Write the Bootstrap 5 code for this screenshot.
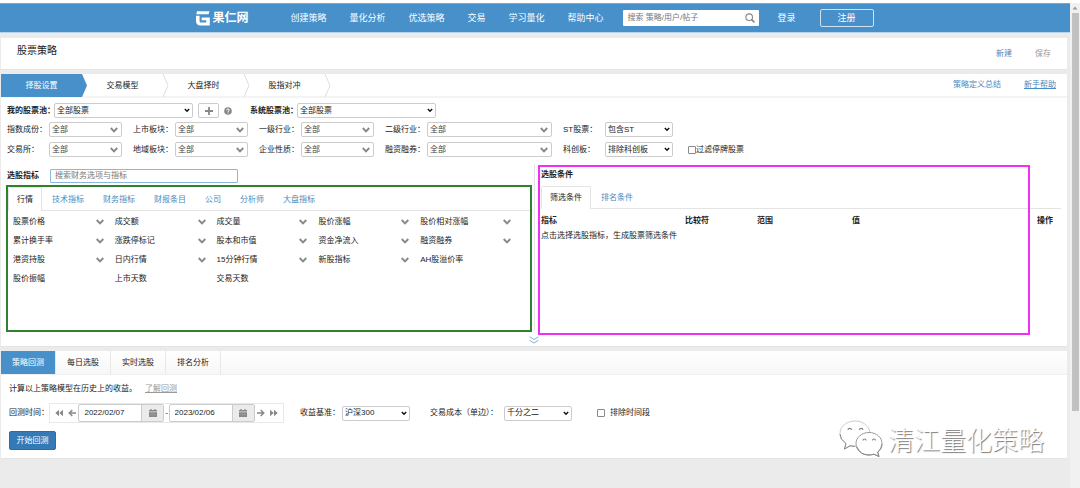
<!DOCTYPE html>
<html lang="zh-CN">
<head>
<meta charset="utf-8">
<meta name="viewport" content="width=device-width, initial-scale=1">
<title>果仁网 - 股票策略</title>
<link rel="stylesheet" href="https://cdn.jsdelivr.net/npm/bootstrap@5.3.0/dist/css/bootstrap.min.css">
<style>
body{font:8px/12px "Liberation Sans","Noto Sans CJK SC",sans-serif;color:#222;background:#ebebeb;min-height:100vh}
a{color:#4a8ac0;text-decoration:none}
input,select,button{font:inherit;color:inherit}
label{white-space:nowrap}
.page-main{min-width:0;padding-top:3px;background:linear-gradient(#fff 3px,transparent 3px)}
.topbar{height:30px;background:#4790ca;border-top:1px solid #6fa9d8;border-bottom:1px solid #b9d3e8;font-size:9px}
.topbar a{color:#fff}
.brand-link{gap:2px}
.brand-name{font-size:12px;font-weight:700}
.main-menu{gap:23px;margin-left:42px}
.site-search{width:136px;height:16px;background:#fff;margin-left:19px;padding-right:4px;border-radius:1px}
.site-search input{font-size:8px;width:110px;padding:0 0 0 5px}
.plain-input{border:0;outline:0;background:transparent;min-width:0}
::placeholder{color:#777!important;opacity:1}
.login-link{margin-left:19px}
.register-btn{width:54px;height:18px;margin-left:24px;padding:0;border:1px solid #cfe2f2;border-radius:2px;background:transparent;color:#fff;line-height:14px}
.panel{background:#fff;margin:0 3px 4px 1px;border-bottom:1px solid #e4e4e4;position:relative}
.title-panel{height:32px;margin-top:5px;padding:0 16px}
.title-panel h1{font-size:10px;line-height:14px;margin:0 0 5px;font-weight:400}
.title-panel nav{gap:23px;padding-top:1px}
.muted-link{color:#999}
.step-bar{height:24px;border-bottom:2px solid #f4f4f4;padding-right:11px}
.step-bar .step{width:81px;height:23px;color:#222;position:relative;text-align:center;line-height:23px}
.step svg{position:absolute;right:-6px;top:0;z-index:1}
.step-bar .step.active{background:#4790ca;color:#fff}
.help-links{gap:23px}
.filters{padding:5px 6px 0}
.pool-row{height:15px;margin-bottom:4px}
.pool-row label{width:47px}
.hint-icon{margin:0 18px 0 5px}
.filter-row{gap:5px 11px;margin-bottom:5px}
.filter-row label.name{width:42px}
.drop{appearance:none;height:15px;border:1px solid #ccc;border-radius:2px;padding:0 12px 0 2px;line-height:12px;background:#fff url("data:image/svg+xml,%3Csvg xmlns='http://www.w3.org/2000/svg' width='6' height='5'%3E%3Cpath d='M.8 1 3 3.3 5.2 1' fill='none' stroke='%23111' stroke-width='1.4'/%3E%3C/svg%3E") no-repeat right 2px center}
.drop.soft{color:#444;background-image:url("data:image/svg+xml,%3Csvg xmlns='http://www.w3.org/2000/svg' width='8' height='6'%3E%3Cpath d='M.8 1 4 4.3 7.2 1' fill='none' stroke='%23888' stroke-width='1.9'/%3E%3C/svg%3E");background-position:right 3px center}
.w-a{width:73px}.w-b{width:125px}.w-c{width:68px}.w-pool{width:139px}
.add-btn{width:21px;height:15px;border:1px solid #ccc;border-radius:2px;background:#fff;padding:0;line-height:0;margin-left:5px}
.tick{appearance:none;width:8px;height:8px;border:1px solid #888;border-radius:1px;background:#fff;margin:0}
.tick:checked{background:#4790ca}
.builder{padding-top:2px}
.left-pane{width:534px;border-right:1px solid #e4e4e4;height:167px;padding:4px 2px 0 5px}
.find-row{height:15px;padding-left:1px;margin-bottom:2px}
.find-row input{width:188px;height:14px;border:1px solid #8bb8dd;border-radius:1px;padding:0 4px;outline:0}
.find-row label{width:43px}
.metric-box{height:147px;border:2px solid #2f8130}
.tabs-line{gap:1px;border-bottom:1px solid #e4e4e4;height:24px}
.tabs-line button{border:1px solid transparent;border-bottom:0;background:transparent;color:#4a8ac0;padding:0 8px;height:24px;border-radius:2px 2px 0 0;white-space:nowrap}
.tabs-line button.active{background:#fff;border-color:#e4e4e4;color:#222}
.metrics{display:grid;grid-template-columns:repeat(5,1fr);padding:1px 8px 0 5px}
.metrics a{color:#222;height:19px;padding-right:11px}
.right-pane{padding:4px 6px 0 6px;position:relative}
.right-pane h2{font-size:8px;line-height:14px;font-weight:700;margin:0 0 4px}
.right-pane .tabs-line{height:23px}
.right-pane .tabs-line button{height:23px}
.cond{width:100%;margin-top:4px;table-layout:fixed}
.cond th,.cond td{padding:0;height:15px;line-height:12px}
.col-metric{width:144px}.col-compare{width:72px}.col-range{width:95px}.col-action{width:24px}
.mark-frame{position:absolute;left:3px;right:37px;top:1px;height:170px;border:2px solid #f02ff0;pointer-events:none}
.expand{height:15px;width:100%;border:0;background:transparent;padding:2px 0 0;line-height:0}
.mode-bar{height:24px;background:linear-gradient(#fff,#f7f7f7);border-bottom:1px solid #f0f0f0}
.mode-bar button{width:55px;border:0;border-right:1px solid #e8e8e8;background:transparent;padding:0}
.mode-bar button.active{background:#4790ca;color:#fff}
.test-body{padding:8px}
.intro{gap:8px;margin-bottom:8px}
.test-row{height:20px}
.test-row .lb-time{width:40px}
.test-row .lb-base{width:42px;margin-left:16px}
.test-row .lb-cost{width:74px;margin-left:20px}
.test-row .tick{margin:0 5px 0 25px}
.range-box{height:20px;border:1px solid #e8e8e8;width:235px;padding:0 3px}
.range-box .nav-btn{border:0;background:transparent;padding:0;width:12px;line-height:0}
.date-group{width:86px;height:18px;border:1px solid #ccc;border-radius:2px}
.date-group input{width:62px;padding:0 5px}
.date-group button{width:22px;height:16px;border:0;border-left:1px solid #ccc;background:#ebebeb;padding:0;line-height:0}
.run-btn{width:47px;height:19px;border:1px solid #2e6da4;border-radius:2px;background:#337ab7;color:#fff;padding:0;margin-top:8px}
.wm{position:absolute;right:23px;bottom:0;color:#fff;font:300 26px/36px "Noto Sans CJK SC",sans-serif;text-shadow:1px 1px 1px #777;gap:5px}
.scroll-track{width:10px;background:#f1f1f1;border-top:3px solid #fff;flex:none}
.scroll-thumb{width:7px;height:82%;background:#c1c1c1;margin:0 0 0 2px}
</style>
</head>
<body class="d-flex">
<svg class="d-none">
<symbol id="chev" viewBox="0 0 8 6"><path d="M.7 1 4 4.3 7.3 1" fill="none" stroke="#888" stroke-width="1.9"/></symbol>
<symbol id="arrow" viewBox="0 0 8 8"><path d="M8 4H1.5M4.3 1 1.3 4l3 3" fill="none" stroke="#888" stroke-width="1.5"/></symbol>
<symbol id="rewind" viewBox="0 0 8 8"><path d="M4 .7v6.6L.3 4zM8 .7v6.6L4.3 4z" fill="#888"/></symbol>
<symbol id="cal" viewBox="0 0 8 8"><path d="M0 1h1.4V0h1.2v1h2.8V0h1.2v1H8v1.5H0zM0 3.2h8V8H0z" fill="#888"/><path d="M1 5.5h6M3 3.5v4M5.2 3.5v4" stroke="#aaa" stroke-width=".4"/></symbol>
</svg>
<div class="page-main flex-grow-1">
  <header class="topbar d-flex align-items-center justify-content-center">
    <a href="#" class="brand-link d-flex align-items-center">
      <svg width="14" height="15" viewBox="0 0 14 15"><path d="M1 .3h12.500l-1 3H.3zM0 4.800h3.600v5.400q0 1.300 1.300 1.300h5.300V9.200H5.600V6.400H13.800v8.100H4.500Q0 14.300 0 10z" fill="#fff"/></svg>
      <span class="brand-name">果仁网</span>
    </a>
    <nav class="main-menu d-flex">
      <a href="#">创建策略</a><a href="#">量化分析</a><a href="#">优选策略</a><a href="#">交易</a><a href="#">学习量化</a><a href="#">帮助中心</a>
    </nav>
    <form class="site-search d-flex align-items-center justify-content-between">
      <input class="plain-input" type="text" placeholder="搜索 策略/用户/帖子" aria-label="搜索">
      <svg width="10" height="10" viewBox="0 0 10 10"><circle cx="4.2" cy="4.2" r="3.3" fill="none" stroke="#888" stroke-width="1.1"/><path d="m6.6 6.6 2.8 2.8" stroke="#888" stroke-width="1.6"/></svg>
    </form>
    <a href="#" class="login-link">登录</a>
    <button class="register-btn" type="button">注册</button>
  </header>

  <section class="panel title-panel d-flex align-items-center justify-content-between">
    <h1>股票策略</h1>
    <nav class="d-flex"><a href="#">新建</a><a href="#" class="muted-link">保存</a></nav>
  </section>

  <section class="panel">
    <div class="step-bar d-flex align-items-center justify-content-between">
      <div class="d-flex">
        <a href="#" class="step active">择股设置<svg width="7" height="23" viewBox="0 0 7 23"><path d="M0 0h1l5 11.500L1 23H0z" fill="#4790ca"/></svg></a>
        <a href="#" class="step">交易模型<svg width="7" height="23" viewBox="0 0 7 23"><path d="m1 0 5 11.500L1 23" fill="none" stroke="#ddd"/></svg></a>
        <a href="#" class="step">大盘择时<svg width="7" height="23" viewBox="0 0 7 23"><path d="m1 0 5 11.500L1 23" fill="none" stroke="#ddd"/></svg></a>
        <a href="#" class="step">股指对冲<svg width="7" height="23" viewBox="0 0 7 23"><path d="m1 0 5 11.500L1 23" fill="none" stroke="#ddd"/></svg></a>
      </div>
      <nav class="help-links d-flex"><a href="#">策略定义总结</a><a href="#" class="text-decoration-underline">新手帮助</a></nav>
    </div>
    <div class="filters">
      <div class="pool-row d-flex align-items-center">
        <label for="mine" class="fw-bold">我的股票池：</label>
        <select id="mine" class="drop w-pool"><option>全部股票</option></select>
        <button class="add-btn" type="button" aria-label="添加"><svg width="8" height="8"><path d="M4 0v8M0 4h8" stroke="#888" stroke-width="1.800"/></svg></button>
        <svg class="hint-icon" width="8" height="8" viewBox="0 0 8 8"><circle cx="4" cy="4" r="3.800" fill="#888"/><path d="M2.700 3.200Q2.800 2 4 2t1.300 1.100Q5.300 3.800 4 4.300v.6M4 5.500v1" fill="none" stroke="#fff" stroke-width="1"/></svg>
        <label for="sys" class="fw-bold">系统股票池：</label>
        <select id="sys" class="drop w-pool"><option>全部股票</option></select>
      </div>
      <div class="filter-row d-flex flex-wrap">
        <div class="d-flex align-items-center"><label class="name" for="f1">指数成份：</label><select id="f1" class="drop soft w-a"><option>全部</option></select></div>
        <div class="d-flex align-items-center"><label class="name" for="f2">上市板块：</label><select id="f2" class="drop soft w-a"><option>全部</option></select></div>
        <div class="d-flex align-items-center"><label class="name" for="f3">一级行业：</label><select id="f3" class="drop soft w-a"><option>全部</option></select></div>
        <div class="d-flex align-items-center"><label class="name" for="f4">二级行业：</label><select id="f4" class="drop soft w-b"><option>全部</option></select></div>
        <div class="d-flex align-items-center"><label class="name" for="f5">ST股票：</label><select id="f5" class="drop w-c"><option>包含ST</option></select></div>
      </div>
      <div class="filter-row d-flex flex-wrap">
        <div class="d-flex align-items-center"><label class="name" for="g1">交易所：</label><select id="g1" class="drop soft w-a"><option>全部</option></select></div>
        <div class="d-flex align-items-center"><label class="name" for="g2">地域板块：</label><select id="g2" class="drop soft w-a"><option>全部</option></select></div>
        <div class="d-flex align-items-center"><label class="name" for="g3">企业性质：</label><select id="g3" class="drop soft w-a"><option>全部</option></select></div>
        <div class="d-flex align-items-center"><label class="name" for="g4">融资融券：</label><select id="g4" class="drop soft w-b"><option>全部</option></select></div>
        <div class="d-flex align-items-center"><label class="name" for="g5">科创板：</label><select id="g5" class="drop w-c"><option>排除科创板</option></select></div>
        <div class="d-flex align-items-center ms-1"><input class="tick" type="checkbox" id="halt"><label for="halt">过滤停牌股票</label></div>
      </div>
    </div>
    <div class="builder d-flex">
      <div class="left-pane flex-shrink-0">
        <div class="find-row d-flex align-items-center"><label for="find" class="fw-bold">选股指标</label><input id="find" type="text" placeholder="搜索财务选项与指标"></div>
        <div class="metric-box">
          <div class="tabs-line d-flex"><button type="button" class="active">行情</button><button type="button">技术指标</button><button type="button">财务指标</button><button type="button">财报条目</button><button type="button">公司</button><button type="button">分析师</button><button type="button">大盘指标</button></div>
          <div class="metrics" id="metrics"></div>
        </div>
      </div>
      <div class="right-pane flex-grow-1">
        <h2>选股条件</h2>
        <div class="tabs-line d-flex"><button type="button" class="active">筛选条件</button><button type="button">排名条件</button></div>
        <table class="cond">
          <colgroup><col class="col-metric"><col class="col-compare"><col class="col-range"><col><col class="col-action"></colgroup>
          <thead><tr><th>指标</th><th>比较符</th><th>范围</th><th>值</th><th>操作</th></tr></thead>
          <tbody><tr><td colspan="5">点击选择选股指标，生成股票筛选条件</td></tr></tbody>
        </table>
        <div class="mark-frame"></div>
      </div>
    </div>
    <button class="expand d-block" type="button" aria-label="展开"><svg width="10" height="8" viewBox="0 0 10 8"><path d="m.5.7 4.500 2.800L9.500.7M.5 4.200 5 7l4.500-2.800" fill="none" stroke="#7fb0da"/></svg></button>
  </section>

  <section class="panel">
    <div class="mode-bar d-flex"><button type="button" class="active">策略回测</button><button type="button">每日选股</button><button type="button">实时选股</button><button type="button">排名分析</button></div>
    <div class="test-body">
      <div class="intro d-flex"><span>计算以上策略模型在历史上的收益。</span><a href="#" class="muted-link text-decoration-underline">了解回测</a></div>
      <div class="test-row d-flex align-items-center">
        <label for="d1" class="lb-time">回测时间：</label>
        <div class="range-box d-flex align-items-center justify-content-between">
          <button class="nav-btn" type="button" aria-label="最早"><svg width="8" height="8"><use href="#rewind"/></svg></button>
          <button class="nav-btn" type="button" aria-label="前移"><svg width="8" height="8"><use href="#arrow"/></svg></button>
          <div class="date-group d-flex"><input id="d1" class="plain-input" type="text" value="2022/02/07"><button type="button" aria-label="选择开始日期"><svg width="8" height="8"><use href="#cal"/></svg></button></div>
          <span>-</span>
          <div class="date-group d-flex"><input class="plain-input" type="text" value="2023/02/06" aria-label="结束日期"><button type="button" aria-label="选择结束日期"><svg width="8" height="8"><use href="#cal"/></svg></button></div>
          <button class="nav-btn" type="button" aria-label="后移"><svg width="8" height="8"><use href="#arrow" transform="rotate(180 4 4)"/></svg></button>
          <button class="nav-btn" type="button" aria-label="最新"><svg width="8" height="8"><use href="#rewind" transform="rotate(180 4 4)"/></svg></button>
        </div>
        <label for="base" class="lb-base">收益基准：</label>
        <select id="base" class="drop w-c"><option>沪深300</option></select>
        <label for="cost" class="lb-cost">交易成本（单边）：</label>
        <select id="cost" class="drop w-c"><option>千分之二</option></select>
        <input class="tick" type="checkbox" id="skip"><label for="skip">排除时间段</label>
      </div>
      <button class="run-btn" type="button">开始回测</button>
    </div>
    <div class="wm d-flex align-items-center">
      <svg width="44" height="38" viewBox="0 0 44 38"><g fill="#fff" stroke="#ccc" stroke-width="1"><path d="M16 1C7.500 1 1 6.500 1 13.500c0 4.200 2.300 7.700 6 10L5.500 29l5.500-3.200c8 2 20-1.500 20-12.300C31 6.500 24 1 16 1z"/><path stroke="#999" d="M30 12.500c-7.500 0-13 5-13 11.200S22.500 35 30 35q2.500 0 4.800-.8L40 36.500l-1.300-4.300c2.800-2 4.300-5 4.300-8.500 0-6.200-5.500-11.200-13-11.200z"/></g><path d="M1 14q0 5.500 6 9.500L5.500 29l5.500-3.200 5 .5M18 27q3 8 12 8 2.500 0 4.800-.8L40 36.500l-1.300-4.300q4-3.500 4.300-8" fill="none" stroke="#888"/><g fill="none" stroke="#888" stroke-width="1.200"><path d="M9 10a1.700 1.700 0 0 1 3.400 0M20.500 10a1.700 1.700 0 0 1 3.400 0M24 20.500a1.500 1.500 0 0 1 3 0M33.500 20.500a1.500 1.500 0 0 1 3 0"/></g></svg>
      <span>清江量化策略</span>
    </div>
  </section>
</div>
<div class="scroll-track" aria-hidden="true"><svg class="d-block" width="10" height="10"><path d="m2.500 6.500 2.500-3 2.500 3z" fill="#999"/></svg><div class="scroll-thumb"></div></div>
<script>
const rows=[["股票价格","成交额","成交量","股价涨幅","股价相对涨幅"],["累计换手率","涨跌停标记","股本和市值","资金净流入","融资融券"],["港资持股","日内行情","15分钟行情","新股指标","AH股溢价率"],["股价振幅","上市天数","交易天数"]];
const leaf=["AH股溢价率","股价振幅","上市天数","交易天数"];
document.getElementById("metrics").innerHTML=rows.flat().map(t=>`<a href="#" class="d-flex align-items-center justify-content-between"><span>${t}</span>${leaf.includes(t)?"":'<svg width="8" height="6"><use href="#chev"/></svg>'}</a>`).join("");
</script>
<script src="https://cdn.jsdelivr.net/npm/bootstrap@5.3.0/dist/js/bootstrap.bundle.min.js"></script>
</body>
</html>
